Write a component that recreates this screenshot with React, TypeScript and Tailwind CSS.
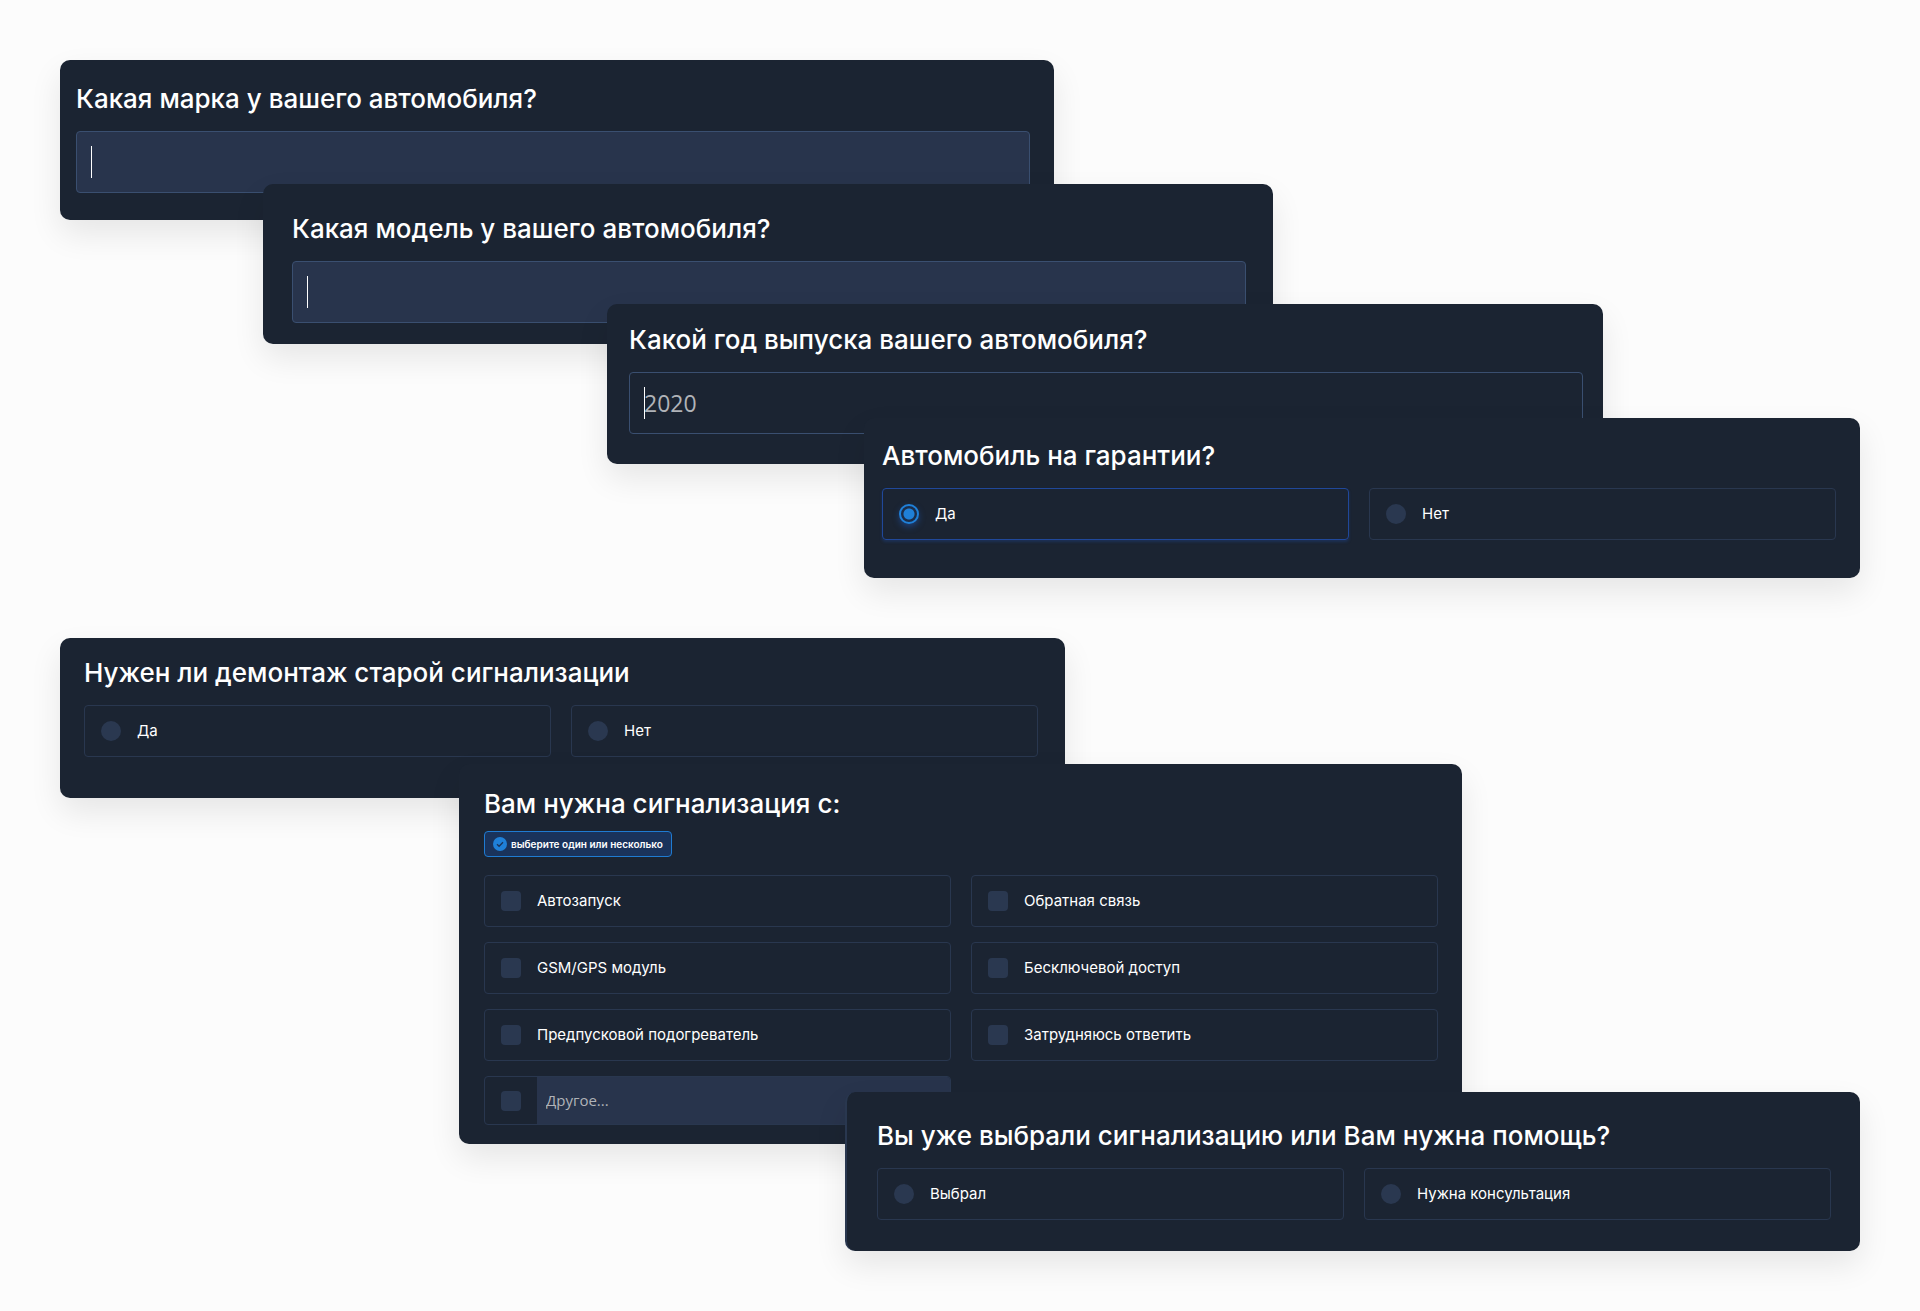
import { ReactNode, useId } from "react";
import clsx from "clsx";

interface CardProps {
  title: string;
  className?: string;
  children: ReactNode;
}

const LABEL_FONT = "font-['Inter',sans-serif]";
const INPUT_FONT = "font-['Open_Sans','Noto_Sans',sans-serif]";

function Card({ title, className, children }: CardProps) {
  return (
    <section
      className={clsx(
        "relative rounded-[10px] bg-[#1b2432] text-white shadow-[0_14px_32px_rgba(0,0,0,0.09)]",
        className
      )}
    >
      <h2 className="mb-3.5 text-[26px] leading-9 font-medium">{title}</h2>
      {children}
    </section>
  );
}

interface TextFieldProps {
  label: string;
  placeholder?: string;
  filled?: boolean;
}

function TextField({ label, placeholder, filled = false }: TextFieldProps) {
  return (
    <div className="relative">
      <input
        type="text"
        aria-label={label}
        placeholder={placeholder}
        className={clsx(
          "block h-[62px] w-full rounded-[4px] border border-[#3a4f70] px-3.5 text-[23px] text-white outline-none placeholder:text-[#b0b3b8]",
          INPUT_FONT,
          filled ? "bg-[#28344c]" : "bg-transparent"
        )}
      />
      {/* caret */}
      <span className="absolute inset-y-[15px] left-[15px] w-px bg-white" />
    </div>
  );
}

interface OptionProps {
  type: "radio" | "checkbox";
  name: string;
  label: string;
  checked?: boolean;
}

function Option({ type, name, label, checked = false }: OptionProps) {
  return (
    <label
      className={clsx(
        "flex h-[52px] cursor-pointer items-center gap-4 rounded-[4px] border px-4 text-[15px] leading-6",
        checked ? "border-[#20489a] shadow-[0_2px_3px_rgba(32,80,170,0.3)]" : "border-[#29374f]"
      )}
    >
      <input
        type={type}
        name={name}
        defaultChecked={checked}
        className={clsx(
          "size-5 shrink-0 appearance-none bg-[#2a3850]",
          type === "radio"
            ? "rounded-full checked:border-2 checked:border-[#1f80d8] checked:bg-[radial-gradient(circle,#1f80d8_5px,#1b2d4a_6px)] checked:shadow-[0_3px_6px_rgba(30,90,190,0.5)]"
            : "rounded-[4px]"
        )}
      />
      <span>{label}</span>
    </label>
  );
}

function OptionGrid({ children }: { children: ReactNode }) {
  return <div className="grid grid-cols-2 gap-x-5 gap-y-[15px]">{children}</div>;
}

function MultiBadge() {
  return (
    <div className="flex h-[26px] w-fit items-center gap-1 rounded-[4px] border border-[#1f7bd2] bg-[#1a335b] px-2 text-[10px] font-semibold">
      <svg className="size-3.5" viewBox="0 0 14 14" fill="none">
        <circle cx="7" cy="7" r="7" fill="#1f80d8" />
        <path d="M4 7.2l2.1 2.1L10 5.3" stroke="#1a335b" strokeWidth="1.3" />
      </svg>
      <span>выберите один или несколько</span>
    </div>
  );
}

function OtherOption() {
  const id = useId();
  return (
    <div className="flex h-[49px] overflow-hidden rounded-[4px] border border-[#29374f]">
      <label htmlFor={id} className="flex w-[52px] shrink-0 items-center pl-4">
        <input
          id={id}
          type="checkbox"
          name="features"
          aria-label="Другое"
          className="size-5 appearance-none rounded-[4px] bg-[#2a3850]"
        />
      </label>
      <input
        type="text"
        aria-label="Другое"
        placeholder="Другое..."
        className={clsx(
          "min-w-0 flex-1 bg-[#28344c] px-[9px] text-[15px] text-white outline-none placeholder:text-[#b0b3b8]",
          INPUT_FONT
        )}
      />
    </div>
  );
}

const features = [
  "Автозапуск",
  "Обратная связь",
  "GSM/GPS модуль",
  "Бесключевой доступ",
  "Предпусковой подогреватель",
  "Затрудняюсь ответить",
];

export default function App() {
  return (
    <main className={clsx("flex min-h-screen flex-col gap-[60px] bg-[#fcfcfc] p-[60px]", LABEL_FONT)}>
      {/* Car details */}
      <div className="flex flex-col">
        <Card title="Какая марка у вашего автомобиля?" className="mr-[806px] pt-[21px] pr-6 pb-[27px] pl-4">
          <TextField label="Марка автомобиля" filled />
        </Card>
        <Card
          title="Какая модель у вашего автомобиля?"
          className="-mt-9 mr-[587px] ml-[203px] pt-[27px] pr-[27px] pb-[21px] pl-[29px]"
        >
          <TextField label="Модель автомобиля" filled />
        </Card>
        <Card
          title="Какой год выпуска вашего автомобиля?"
          className="-mt-10 mr-[257px] ml-[547px] pt-[18px] pr-5 pb-[30px] pl-[22px]"
        >
          <TextField label="Год выпуска" placeholder="2020" />
        </Card>
        <Card title="Автомобиль на гарантии?" className="-mt-[46px] ml-[804px] pt-5 pr-6 pb-[38px] pl-[18px]">
          <OptionGrid>
            <Option type="radio" name="warranty" label="Да" checked />
            <Option type="radio" name="warranty" label="Нет" />
          </OptionGrid>
        </Card>
      </div>

      {/* Alarm system details */}
      <div className="flex flex-col">
        <Card
          title="Нужен ли демонтаж старой сигнализации"
          className="mr-[795px] pt-[17px] pr-[27px] pb-[41px] pl-6"
        >
          <OptionGrid>
            <Option type="radio" name="dismantle" label="Да" />
            <Option type="radio" name="dismantle" label="Нет" />
          </OptionGrid>
        </Card>
        <Card
          title="Вам нужна сигнализация с:"
          className="-mt-[34px] mr-[398px] ml-[399px] pt-[22px] pr-6 pb-[19px] pl-[25px]"
        >
          <div className="-mt-[5px] mb-[18px]">
            <MultiBadge />
          </div>
          <OptionGrid>
            {features.map((feature) => (
              <Option key={feature} type="checkbox" name="features" label={feature} />
            ))}
            <OtherOption />
          </OptionGrid>
        </Card>
        <Card
          title="Вы уже выбрали сигнализацию или Вам нужна помощь?"
          className="-mt-[52px] ml-[785px] border-l-2 border-[#29374f] pt-[26px] pr-[29px] pb-[31px] pl-[30px]"
        >
          <OptionGrid>
            <Option type="radio" name="help" label="Выбрал" />
            <Option type="radio" name="help" label="Нужна консультация" />
          </OptionGrid>
        </Card>
      </div>
    </main>
  );
}
